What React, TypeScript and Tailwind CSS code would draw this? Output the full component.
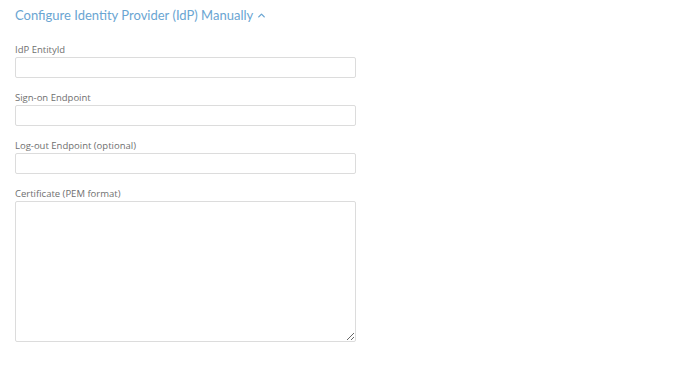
import React from 'react';
import { ChevronUp } from 'lucide-react';

const fields = ['IdP EntityId', 'Sign-on Endpoint', 'Log-out Endpoint (optional)'];

const App: React.FC = () => {
  return (
    <div className="min-h-screen w-full bg-white px-[15px] pt-[7px]" style={{ fontFamily: '"Open Sans", sans-serif' }}>
      <button type="button" className="flex h-[16px] items-center gap-[3px] text-[13px] leading-[16px] text-[#6aa5d2]" style={{ fontFamily: 'Lato, sans-serif' }}>
        Configure Identity Provider (IdP) Manually
        <ChevronUp className="h-[11px] w-[11px]" strokeWidth={3} />
      </button>

      <div className="mt-[21px] w-[341px]">
        {fields.map((label) => (
          <div key={label} className="mb-[14px]">
            <label className="mb-[2px] block h-[11px] text-[9.5px] leading-[11px] text-[#6f6f6f]">{label}</label>
            <input type="text" className="block h-[21px] w-full rounded-[2px] border border-[#dcdcdc] bg-white outline-none" />
          </div>
        ))}
        <div>
          <label className="mb-[2px] block h-[11px] text-[9.5px] leading-[11px] text-[#6f6f6f]">Certificate (PEM format)</label>
          <textarea className="block h-[141px] w-full rounded-[2px] border border-[#dcdcdc] bg-white outline-none" />
        </div>
      </div>
    </div>
  );
};

export default App;
